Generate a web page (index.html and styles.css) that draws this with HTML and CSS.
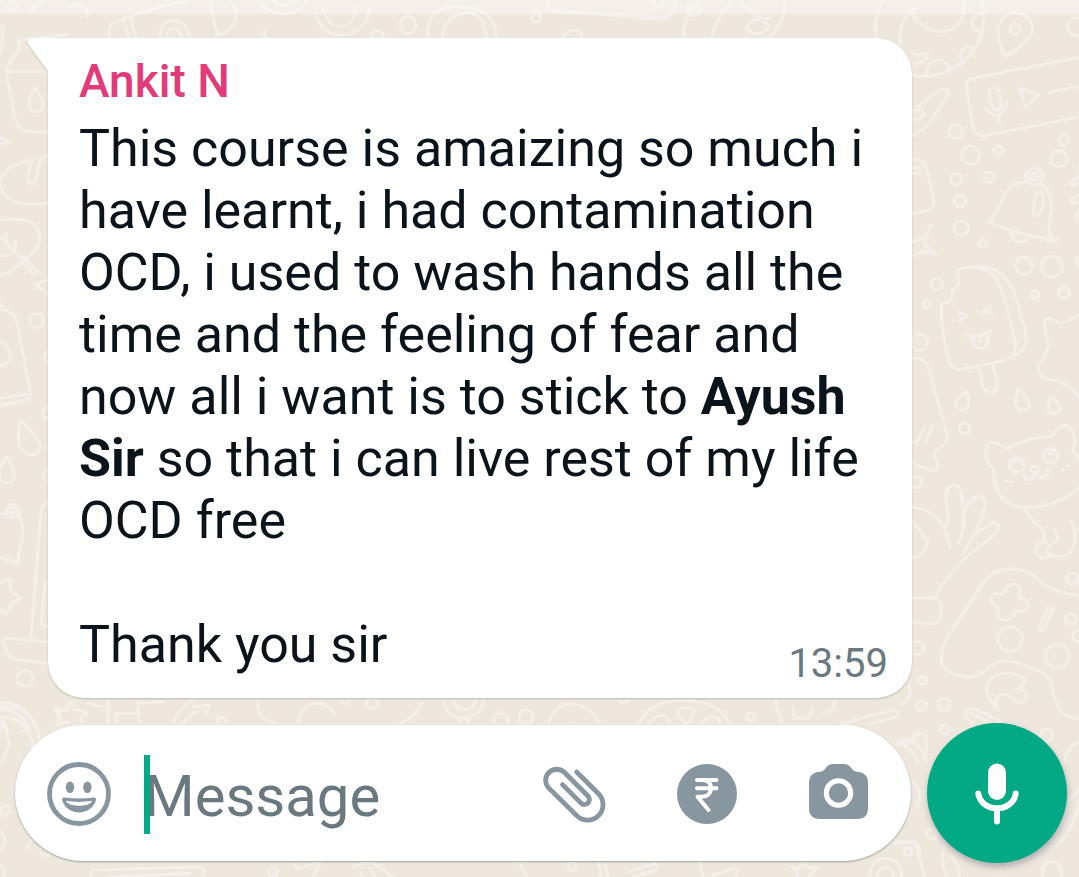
FILE: index.html
```html
<!DOCTYPE html>
<html lang="en">
<head>
    <meta charset="UTF-8">
    <meta name="viewport" content="width=device-width, initial-scale=1.0">
    <title>Chat</title>
    <link rel="stylesheet" href="styles.css">
</head>
<body>

<!-- Wallpaper doodles -->
<svg class="wallpaper" viewBox="0 0 1079 877" preserveAspectRatio="xMidYMin slice" aria-hidden="true">
    <!-- top right -->
    <g transform="translate(900 0) scale(0.3333)">
        <path d="M0 130Q-5 60 45 25M35 40Q70 95 130 95Q200 85 190 0M245 0Q270 120 190 185Q120 240 36 226M248 38Q205 50 222 85Q235 98 250 95M225 145Q195 130 183 160Q180 175 190 185M80 220Q82 180 118 180Q145 185 152 215M36 160Q55 170 70 160Q90 155 82 172Q70 190 40 190"/>
        <path d="M315 172Q285 100 298 70Q315 35 350 40Q395 45 398 90Q390 125 315 172Z"/>
        <circle cx="345" cy="87" r="15"/>
        <circle cx="530" cy="80" r="27"/>
        <path d="M540 172L220 234Q195 240 200 262L218 380Q225 412 255 407L540 350"/>
        <path d="M268 280Q270 262 284 264Q296 266 298 280L303 310Q305 328 290 330Q277 330 273 312ZM258 323Q270 348 292 345Q315 340 320 310M292 345L300 368M360 264L417 284L375 322ZM450 276L540 259"/>
        <path d="M36 408Q70 400 105 345L143 285Q150 265 128 268Q95 280 36 338M36 358Q65 365 70 340Q68 325 52 330"/>
        <circle cx="167" cy="394" r="20"/><circle cx="211" cy="465" r="27"/><circle cx="296" cy="451" r="14"/>
        <circle cx="169" cy="538" r="17"/><circle cx="268" cy="532" r="16"/><circle cx="180" cy="602" r="17"/>
        <circle cx="184" cy="684" r="22"/><circle cx="248" cy="730" r="11"/><circle cx="491" cy="420" r="15"/>
        <circle cx="476" cy="476" r="25"/><circle cx="404" cy="530" r="26"/><circle cx="404" cy="530" r="11"/>
        <path d="M36 480Q70 475 78 500L102 600Q105 625 80 632L36 642M36 505Q55 495 60 512Q55 525 36 520"/>
        <path d="M265 666Q290 645 310 595Q330 545 385 543M425 552Q460 580 453 640Q438 690 458 718Q350 705 265 666M332 695Q340 730 370 724Q382 718 384 710M405 590Q410 570 426 580Q436 600 422 640Q405 655 400 635Z"/>
        <path d="M540 482Q535 500 540 515M540 530Q505 545 516 556Q530 555 540 545M540 582Q510 595 516 610L540 608M540 630Q525 640 530 660"/>
        <path d="M36 725Q75 720 94 675Q70 720 75 735L110 765Q80 745 36 768"/>
    </g>
    <!-- ice cream, drops, cat -->
    <g transform="translate(900 240) scale(0.3333)">
        <path d="M170 90Q240 70 290 92Q345 130 360 220Q385 290 375 315Q365 345 300 365L175 389Q150 385 145 360Q120 250 125 190Q165 190 155 150Q190 140 170 90M235 82Q290 90 315 180L345 300Q350 335 335 350"/>
        <path d="M172 217L202 228L176 242M272 198L248 215L276 220M203 288Q245 290 273 273M218 292Q220 325 245 326Q268 320 262 284M240 290L243 304M235 384L248 435Q255 460 278 457Q298 448 292 425L277 372"/>
        <circle cx="372" cy="77" r="25"/><circle cx="456" cy="80" r="31"/><circle cx="111" cy="133" r="18"/>
        <circle cx="82" cy="192" r="12"/><circle cx="404" cy="165" r="12"/><circle cx="492" cy="158" r="17"/>
        <circle cx="58" cy="307" r="24"/><circle cx="193" cy="565" r="16"/><circle cx="540" cy="62" r="12"/>
        <circle cx="50" cy="726" r="17"/><path d="M342 0Q360 12 380 0M440 0Q460 8 475 0"/>
        <path d="M540 222Q495 250 480 250Q440 225 434 242Q432 270 445 315Q440 350 415 375Q410 400 440 418Q500 420 540 475"/>
        <path d="M36 355Q75 350 86 385L143 590Q140 615 102 635L115 680Q110 700 85 688L36 668M36 605L50 612L73 565M78 606L96 560"/>
        <path d="M202 453Q165 475 167 495Q180 518 202 505Q210 490 202 453ZM355 445Q343 480 348 498Q365 520 385 505Q400 490 355 445ZM452 470Q440 500 446 515Q465 530 480 510Q480 485 452 470Z"/>
        <path d="M318 628Q290 600 265 610Q250 640 262 665Q268 682 280 685Q280 740 310 780M318 628Q380 590 455 590Q470 560 500 554Q525 570 524 615L516 625L540 665"/>
        <circle cx="351" cy="675" r="22"/><circle cx="452" cy="648" r="22"/><path d="M342 660Q350 675 360 660M444 634Q450 650 462 636M392 683Q405 675 418 683Q415 698 405 700Q392 695 392 683ZM405 698Q402 720 388 720Q374 720 370 703M405 698Q410 712 430 712Q448 708 445 686M317 724H320M333 727H335M489 688H491M502 677H504"/>
        <path d="M140 780Q135 735 163 735Q188 740 184 780M220 780Q238 760 258 780"/>
    </g>
    <!-- hand, game pad, mushroom -->
    <g transform="translate(900 480) scale(0.3333)">
        <path d="M280 0Q300 80 380 82Q480 80 540 20M378 85Q385 115 425 145Q438 170 432 190Q405 190 408 218Q420 240 445 232M440 215Q445 190 473 183Q475 165 463 150M440 215Q450 230 480 230Q530 228 524 155L514 123M524 148H540"/>
        <path d="M36 82Q100 85 132 145Q150 180 149 205M132 145Q150 125 142 90Q125 20 165 14Q190 20 187 80Q200 140 175 190M190 105Q210 50 240 47Q265 60 250 100Q240 135 190 218M220 165L280 127Q300 130 293 150Q280 170 215 218Q150 270 103 353M36 353H100Q130 360 124 395Q120 430 100 432L36 427M36 122L82 180Q75 235 36 234"/>
        <path d="M540 346Q460 340 415 300Q385 265 320 267Q270 275 245 315L150 460Q115 520 127 555Q150 590 210 591Q240 590 275 555Q310 535 350 548L425 575Q450 590 455 615Q465 680 490 700Q510 715 540 716"/>
        <path d="M318 325Q335 305 355 318Q365 335 352 355Q385 355 383 378Q375 400 345 392Q335 425 315 420Q285 420 298 383Q270 375 274 352Q285 330 308 345ZM444 382L459 385L430 452L415 448Z"/>
        <circle cx="330" cy="477" r="37"/><circle cx="473" cy="528" r="36"/><circle cx="517" cy="296" r="17"/>
        <circle cx="513" cy="418" r="16"/><circle cx="534" cy="468" r="17"/><circle cx="52" cy="504" r="20"/>
        <circle cx="68" cy="601" r="12"/><circle cx="65" cy="677" r="15"/><circle cx="132" cy="674" r="18"/><circle cx="48" cy="8" r="16"/>
        <path d="M298 693Q262 660 260 630Q265 580 320 580Q380 585 372 612Q360 625 352 627Q380 625 380 650Q372 675 345 665Q310 625 290 655Q282 670 298 693M300 725Q210 670 196 695Q195 715 220 728M212 700L270 728M28 620Q38 655 0 675"/>
    </g>
    <!-- around the mic -->
    <g transform="translate(900 700) scale(0.3333)">
        <circle cx="134" cy="87" r="14"/><circle cx="440" cy="106" r="18"/><circle cx="94" cy="402" r="15"/>
        <circle cx="24" cy="455" r="12"/><circle cx="456" cy="515" r="30"/>
        <path d="M0 130Q40 115 65 150Q75 165 80 185M40 125Q50 95 75 102Q85 130 75 165M40 250Q70 270 50 325M0 425Q40 420 48 440L75 531M132 440Q120 490 140 531M155 470Q180 495 178 531M540 125Q500 140 495 185M540 270Q500 295 505 320M540 290Q520 400 470 435M505 320Q490 370 440 420"/>
    </g>
    <!-- left edge -->
    <g transform="translate(0 0) scale(0.3333)">
        <circle cx="36" cy="18" r="14"/>
        <path d="M92 30L130 0M205 18Q230 5 240 20Q265 15 262 50M330 115Q320 75 345 65L480 20L560 0M370 55L388 115M390 50L408 115M478 115Q480 60 520 62Q565 65 568 115M500 115Q500 85 522 85Q545 90 545 115M630 0L650 105Q690 100 705 65Q715 30 690 0M0 78H10L3 160M58 143Q50 115 75 118L200 105M60 143L18 205Q15 215 30 215H143M18 210L45 360M78 143H88M105 265Q80 300 88 325Q105 345 125 328Q138 305 105 265Z"/>
    </g>
    <g transform="translate(0 120) scale(0.3333)">
        <path d="M48 0Q55 32 80 34L145 38M0 52Q25 60 27 70H0M145 103Q120 110 115 140Q108 195 92 192Q75 185 97 118Q0 140 0 195Q20 270 145 248M0 300Q80 290 105 315Q130 350 110 385L68 428L102 465L112 455L68 410M0 465Q35 460 62 430M60 410L0 350M18 340L20 368M0 408L32 405M48 365L42 398M145 478L105 495L145 522M0 545L5 568Q45 575 52 610L92 825Q95 835 80 840L0 858M0 660Q45 695 25 725Q15 740 0 738M82 822L0 835"/>
        <circle cx="110" cy="602" r="21"/><circle cx="148" cy="712" r="16"/><circle cx="146" cy="880" r="17"/>
    </g>
    <g transform="translate(0 400) scale(0.3333)">
        <path d="M0 15L85 0M62 62Q45 135 68 155Q95 175 118 150Q130 125 62 62ZM20 170Q-15 225 5 245Q30 258 42 235Q50 215 20 170ZM0 340Q15 345 20 338M55 345Q75 380 65 430Q50 470 58 492L0 472M0 550L28 535L32 572L62 595L38 608L18 642L0 628M145 305Q125 310 122 340L93 718M145 680Q125 685 125 660L135 550M145 725L12 714Q15 785 70 780L145 792M0 908Q80 905 112 990M0 930Q60 925 90 990M0 970L10 960L18 985M165 920L175 935L200 930"/>
        <circle cx="38" cy="332" r="20"/><circle cx="38" cy="332" r="9"/><circle cx="142" cy="40" r="16"/>
        <circle cx="146" cy="226" r="16"/><circle cx="75" cy="835" r="24"/>
    </g>
    <!-- under the header strip -->
    <g transform="scale(0.5869 0.3333)">
        <path d="M440 0Q455 45 490 42Q520 30 520 0M465 0Q485 30 505 0M538 40Q545 100 580 105Q625 100 630 30M552 30Q560 80 580 80Q605 75 605 20M730 126Q720 30 770 20Q850 15 845 126M752 126Q755 40 800 38Q830 50 828 126M935 0V30L1135 60Q1150 30 1150 0M950 35L1140 50M1110 0Q1125 45 1130 0M1165 126Q1160 60 1190 0M1212 126Q1215 60 1250 0M1255 0Q1300 60 1312 80Q1290 120 1272 85Q1275 55 1310 55M1337 0Q1340 60 1310 115M955 120Q975 75 990 95L992 115M450 95L452 115M1495 126Q1485 50 1505 0"/>
        <ellipse cx="695" cy="75" rx="13" ry="26"/><ellipse cx="913" cy="52" rx="7" ry="15"/>
        <ellipse cx="643" cy="110" rx="10" ry="17"/><ellipse cx="1182" cy="28" rx="11" ry="20"/>
    </g>
    <!-- between bubble and message bar, and below it -->
    <g transform="translate(0 700) scale(0.3333)">
        <path d="M165 28L195 30L215 5L225 30L262 35L240 55L250 72M165 28L180 50L168 72L205 65M265 10L325 25V0M325 25L322 72M350 40H415V0M415 40L420 72M350 40V72M415 10L490 5M515 75Q540 20 580 0M545 75Q560 50 590 35M580 20L628 15L620 45M775 0Q765 60 830 70M895 75Q900 15 945 10Q990 10 1005 45M1020 0Q1035 20 1050 0M0 20Q100 10 120 120M0 50Q80 50 98 130Q100 210 45 250M0 90L15 70L28 130L5 190M60 100L78 85M0 395Q30 420 0 450M80 445L100 415M120 455Q135 475 150 460M270 531Q275 500 300 510L590 500Q620 500 610 525M320 531L570 520M1060 500Q1100 480 1130 495L1180 531M1080 515L1090 531M1110 505L1125 531M0 495Q15 500 12 531"/>
        <circle cx="1117" cy="10" r="17"/><circle cx="665" cy="64" r="13"/><circle cx="15" cy="332" r="14"/><circle cx="818" cy="515" r="13"/>
        <path d="M880 490L895 505L950 488M960 490L940 531"/>
    </g>
    <g transform="translate(520 700) scale(0.3333)">
        <path d="M85 73Q100 15 155 12Q220 20 240 73M150 70H160M355 73Q390 0 490 0Q600 5 630 73M385 73Q410 35 440 50L450 73M470 30Q495 15 525 30Q510 55 500 73Q480 60 470 30M545 73Q560 40 595 55L600 73M765 0L785 73M820 20Q815 60 850 55Q880 55 875 20M910 40Q945 35 945 0M960 73L1125 28Q1145 35 1130 50L1050 73M295 0Q310 15 325 0M1130 135Q1150 110 1180 125M1140 130Q1180 150 1195 190M1175 120Q1180 95 1200 95M1120 430L1180 425Q1200 430 1200 460M0 490L20 531M235 490L245 531M255 490L265 531M325 515L405 490Q420 500 405 510L340 531M540 490L550 531M580 525L640 505Q660 510 645 525M815 500Q840 510 850 487Q855 510 898 502Q865 520 870 531M830 531Q840 515 815 500M1050 531Q1050 475 1098 475Q1145 480 1145 531M1070 531Q1075 500 1098 500Q1120 505 1122 531"/>
        <circle cx="18" cy="50" r="21"/><circle cx="692" cy="51" r="12"/><circle cx="157" cy="500" r="12"/><circle cx="1163" cy="455" r="12"/>
    </g>
    <path d="M397 725Q415 718 422 703M445 699Q442 716 464 718Q482 716 484 699M453 699Q455 710 465 710Q475 709 476 699M459 718L462 725M468 718L467 725M493 724Q492 712 502 713Q510 716 508 724"/>
</svg>

<div class="header-edge"></div>

<main class="chat">
    <article class="bubble">
        <svg class="tail" viewBox="0 0 22 34" aria-hidden="true">
            <path d="M22 0H5Q-1 1 1 6L21 33H22Z"/>
        </svg>
        <h2 class="sender">Ankit N</h2>
        <p class="text">This course is amaizing so much i have learnt, i had contamination OCD, i used to wash hands all the time and the feeling of fear and now all i want is to stick to <strong>Ayush Sir</strong> so that i can live rest of my life OCD free</p>
        <div class="last-line">
            <p class="text">Thank you sir</p>
            <time class="time" datetime="13:59">13:59</time>
        </div>
    </article>
</main>

<form class="composer">
    <div class="bar">
        <button type="button" class="icon-btn" aria-label="Emoji">
            <svg width="64" height="64" viewBox="0 0 64 64">
                <circle cx="32" cy="32" r="29.5" fill="none" stroke="#8896a0" stroke-width="4.8"/>
                <ellipse cx="23" cy="25.3" rx="4.2" ry="5.8"/>
                <ellipse cx="40.4" cy="25.3" rx="4.2" ry="5.8"/>
                <path fill-rule="evenodd" d="M17 35.5Q32 37.5 47 35.5Q49.5 35.5 49 38C47 45.5 40 50.5 32 50.5S17 45.5 15.2 38Q14.8 35.5 17 35.5ZM18.8 38.8Q21.5 43.8 32 43.8T45.4 38.8Q32 41 18.8 38.8Z"/>
            </svg>
        </button>
        <div class="field">
            <input type="text" placeholder="Message" aria-label="Message">
            <span class="caret"></span>
        </div>
        <div class="tools">
            <button type="button" class="icon-btn" aria-label="Attach">
                <svg width="64" height="60" viewBox="0 0 64 60" fill="none" stroke="#8896a0" stroke-width="4.8" stroke-linecap="round">
                    <path d="M34.7 7L56.5 28.8A15.4 15.4 0 0 1 34.7 50.6L6.9 23.1A11 11 0 0 1 22.5 7.5L46.2 31.2A5 5 0 0 1 39.2 38.3L20.5 19.6" transform="translate(0 1)"/>
                </svg>
            </button>
            <button type="button" class="icon-btn" aria-label="Payment">
                <svg width="60" height="60" viewBox="0 0 60 60">
                    <circle cx="30" cy="30" r="30"/>
                    <path d="M20 16H39.5M20 24.3H39.5M22 16H25C31 16 34 19.5 34 24C34 29.500 30 32.800 25 32.800H20.500L31.500 46" fill="none" stroke="#fff" stroke-width="4" stroke-linecap="round" stroke-linejoin="round"/>
                </svg>
            </button>
            <button type="button" class="icon-btn" aria-label="Camera">
                <svg width="60" height="60" viewBox="0 0 60 60">
                    <path d="M24.500 0H36.500Q40 0 42.500 3L44 5Q46 7.800 49 7.800Q60 8.500 60 19V44Q60 55 49 55H12Q1 55 1 44V19Q1 8.500 12 7.800Q15 7.800 17 5L18.500 3Q21 0 24.500 0Z"/>
                    <circle cx="30.500" cy="29" r="12.200" fill="none" stroke="#fff" stroke-width="5"/>
                </svg>
            </button>
        </div>
    </div>
    <button type="button" class="mic" aria-label="Record voice message">
        <svg viewBox="0 0 140 140">
            <rect x="61" y="40.500" width="18" height="36.500" rx="9" fill="#fff"/>
            <path d="M51.300 70.500A18.800 16.500 0 0 0 88.700 70.500M70 87V98.500" fill="none" stroke="#fff" stroke-width="6" stroke-linecap="round"/>
        </svg>
    </button>
</form>

</body>
</html>
```

FILE: styles.css
```css
* {
    box-sizing: border-box;
    margin: 0;
    padding: 0;
}
body {
    position: relative;
    min-height: 100vh;
    overflow: hidden;
    font-family: Roboto, "Liberation Sans", sans-serif;
    background: #eee7de;
    color: #0a141a;
}
.wallpaper {
    position: absolute;
    top: 0;
    left: 0;
    z-index: -1;
    width: 100%;
    height: 100%;
    fill: none;
    stroke: #f4efe8;
    stroke-linecap: round;
    stroke-linejoin: round;
}
.wallpaper * {
    stroke-width: 3px;
    vector-effect: non-scaling-stroke;
}
.header-edge {
    height: 14px;
    background: rgba(255, 255, 255, 0.35);
}

/* Message bubble */
.chat {
    padding: 24px 167px 25px 48px;
}
.bubble {
    position: relative;
    padding: 16px 24px 10px 31px;
    background: #fff;
    border-radius: 0 36px 36px 36px;
    box-shadow: 0 1px 2px rgba(60, 50, 40, 0.25);
}
.tail {
    position: absolute;
    top: 0;
    left: -21px;
    width: 22px;
    height: 34px;
    fill: #fff;
    filter: drop-shadow(0 1px 1px rgba(60, 50, 40, 0.2));
    clip-path: inset(-2px 1px -3px -3px);
}
.sender {
    margin-bottom: 10px;
    font-size: 46px;
    font-weight: 500;
    line-height: 54px;
    color: #e23b7a;
}
.text {
    font-size: 52px;
    line-height: 62px;
}
.text strong {
    font-weight: 700;
}
.last-line {
    display: flex;
    justify-content: space-between;
    align-items: flex-end;
    margin-top: 62px;
}
.last-line .text {
    padding-bottom: 12px;
}
.time {
    font-size: 40px;
    line-height: 48px;
    color: #6a7880;
}

/* Message bar */
.composer {
    display: flex;
    align-items: center;
    gap: 16px;
    padding: 0 12px 0 15px;
}
.bar {
    flex: 1;
    display: flex;
    align-items: center;
    gap: 33px;
    min-width: 0;
    height: 136px;
    padding: 2px 43px 0 32px;
    background: #fff;
    border-radius: 68px;
    box-shadow: 0 1px 2px rgba(40, 50, 60, 0.4);
}
.icon-btn {
    display: flex;
    border: none;
    background: none;
    fill: #8896a0;
    cursor: pointer;
}
.field {
    position: relative;
    flex: 1;
    min-width: 0;
}
.field input {
    display: block;
    width: 100%;
    height: 79px;
    padding-top: 4px;
    border: none;
    outline: none;
    background: none;
    font-family: inherit;
    font-size: 58px;
    color: #0a141a;
}
.field input::placeholder {
    color: #6a7880;
    opacity: 1;
}
.caret {
    position: absolute;
    top: 0;
    left: 0;
    width: 6px;
    height: 79px;
    background: #03a985;
}
.tools {
    display: flex;
    align-items: center;
    gap: 71px;
}
.mic {
    flex: none;
    width: 140px;
    height: 140px;
    border: none;
    border-radius: 50%;
    background: #03a985;
    box-shadow: 1px 4px 6px rgba(60, 70, 90, 0.35);
    cursor: pointer;
}
.mic svg {
    display: block;
}
```
